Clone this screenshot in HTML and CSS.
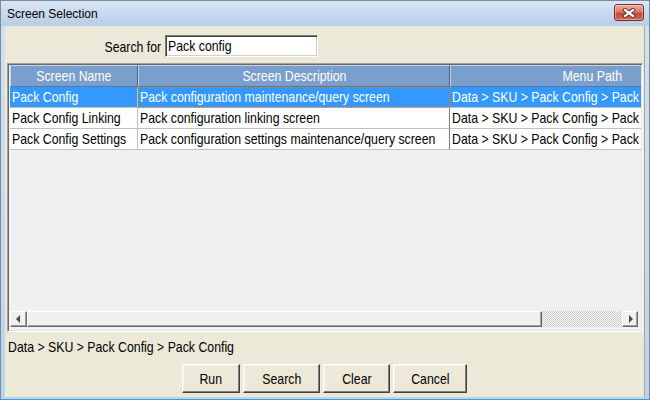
FILE: index.html
```html
<!DOCTYPE html>
<html>
<head>
<meta charset="utf-8">
<title>Screen Selection</title>
<link rel="stylesheet" href="styles.css">
</head>
<body>
<div class="window">
  <div class="titlebar">
    <span class="title">Screen Selection</span>
    <button class="close" aria-label="Close">
      <svg width="14" height="10" viewBox="0 0 14 10">
        <path d="M3 2 L11 8 M11 2 L3 8" stroke="#5b2a25" stroke-width="4" stroke-linecap="square" fill="none"/>
        <path d="M3 2 L11 8 M11 2 L3 8" stroke="#ffffff" stroke-width="2.2" stroke-linecap="square" fill="none"/>
      </svg>
    </button>
  </div>
  <div class="client">
    <div class="search-row">
      <label class="search-label"><span class="nt nt-r">Search for</span></label>
      <div class="search-input" role="textbox"><span class="nt">Pack config</span></div>
    </div>
    <div class="grid-frame">
      <div class="grid-view">
        <div class="grid">
          <div class="grid-row grid-head">
            <div class="hcell"><span class="nt nt-c">Screen Name</span></div>
            <div class="hcell"><span class="nt nt-c">Screen Description</span></div>
            <div class="hcell"><span class="nt nt-c">Menu Path</span></div>
          </div>
          <div class="grid-row selected">
            <div class="cell"><span class="nt">Pack Config</span></div>
            <div class="cell cell-desc focus"><span class="nt">Pack configuration maintenance/query screen</span></div>
            <div class="cell"><span class="nt">Data &gt; SKU &gt; Pack Config &gt; Pack Config</span></div>
          </div>
          <div class="grid-row">
            <div class="cell"><span class="nt">Pack Config Linking</span></div>
            <div class="cell cell-desc"><span class="nt">Pack configuration linking screen</span></div>
            <div class="cell"><span class="nt">Data &gt; SKU &gt; Pack Config &gt; Pack Config Linking</span></div>
          </div>
          <div class="grid-row">
            <div class="cell"><span class="nt">Pack Config Settings</span></div>
            <div class="cell cell-desc"><span class="nt">Pack configuration settings maintenance/query screen</span></div>
            <div class="cell"><span class="nt">Data &gt; SKU &gt; Pack Config &gt; Pack Config Settings</span></div>
          </div>
        </div>
      </div>
      <div class="hscroll">
        <div class="sb-btn sb-left"><span class="arrow arrow-left"></span></div>
        <div class="sb-thumb"></div>
        <div class="sb-track"></div>
        <div class="sb-btn sb-right"><span class="arrow arrow-right"></span></div>
      </div>
    </div>
    <div class="status"><span class="nt">Data &gt; SKU &gt; Pack Config &gt; Pack Config</span></div>
    <div class="buttons">
      <button class="btn btn-run"><span class="nt nt-c">Run</span></button>
      <button class="btn btn-search"><span class="nt nt-c">Search</span></button>
      <button class="btn btn-clear"><span class="nt nt-c">Clear</span></button>
      <button class="btn btn-cancel"><span class="nt nt-c">Cancel</span></button>
    </div>
  </div>
</div>
</body>
</html>
```
FILE: styles.css
```css
* { box-sizing: border-box; }
html, body { margin: 0; padding: 0; }
body { width: 650px; height: 400px; overflow: hidden; background: #c4d7ec; }

.window {
  width: 650px;
  height: 400px;
  display: flex;
  flex-direction: column;
  background: linear-gradient(#d3e2f2, #bcd3ec);
  border: 1px solid #7a8ba0;
  border-bottom-color: #3d9bd6;
}

.titlebar {
  height: 25px;
  flex: none;
  display: flex;
  align-items: center;
  padding: 0 5px 0 6px;
  background: linear-gradient(#d9e6f4, #b6cde8);
}
.title {
  font-family: "Liberation Sans", Arial, sans-serif;
  font-size: 12px;
  color: #000;
  flex: 1;
}
.close {
  width: 30px;
  height: 17px;
  padding: 0;
  margin: 0;
  align-self: flex-start;
  margin-top: 3px;
  border: 1px solid #7a2d26;
  border-radius: 3px;
  background: linear-gradient(#eab0a4 0%, #d97a68 45%, #c4493a 55%, #d06a58 100%);
  box-shadow: inset 0 0 0 1px rgba(255,255,255,0.35);
  display: flex;
  align-items: center;
  justify-content: center;
}

.client {
  flex: 1;
  margin: 0 4px 2px 4px;
  background: #ece9d8;
  border-right: 1px solid #a7a69c;
  font-family: "Liberation Sans", Arial, sans-serif;
  font-size: 15px;
  color: #000;
  display: flex;
  flex-direction: column;
}

/* Arial-Narrow-like text: Arial metrics condensed to 82% */
.nt {
  display: inline-block;
  white-space: nowrap;
  transform: scaleX(0.82);
  transform-origin: 0 50%;
}
.nt-c { transform-origin: 50% 50%; }
.nt-r { transform-origin: 100% 50%; }

.search-row {
  margin-top: 9px;
  height: 22px;
  display: flex;
  align-items: center;
  gap: 4px;
}
.search-label {
  width: 156px;
  text-align: right;
}
.search-input {
  width: 153px;
  height: 22px;
  padding: 0 2px;
  line-height: 20px;
  overflow: hidden;
  background: #fff;
  border: 1px solid;
  border-color: #7f7f7f #fff #fff #7f7f7f;
  box-shadow: inset 1px 1px #404040, inset -1px -1px #d4d0c8;
}

.grid-frame {
  margin: 6px 0 0 2px;
  width: 636px;
  height: 269px;
  border: 1px solid;
  border-color: #a0a0a0 #fff #fff #a0a0a0;
  box-shadow: inset 1px 1px #696969, inset -1px -1px #e3e3e3;
  padding: 1px;
  background: #f0f0f0;
  display: flex;
  flex-direction: column;
}
.grid-view {
  height: 246px;
  overflow: hidden;
  padding-left: 1px;
}
.grid { width: 724px; }
.grid-row {
  display: grid;
  grid-template-columns: 128px 312px 284px;
  height: 21px;
}
.grid-head { height: 22px; }
.hcell {
  background: #7b9fcc;
  color: #fff;
  text-align: center;
  line-height: 20px;
  border-top: 1px solid #c3d4ea;
  border-left: 1px solid #c3d4ea;
  border-right: 1px solid #4e627e;
  border-bottom: 1px solid #5d769a;
  white-space: nowrap;
  overflow: hidden;
}
.cell {
  background: #fff;
  line-height: 20px;
  padding-left: 2px;
  border-right: 1px solid #c0c0c0;
  border-bottom: 1px solid #c0c0c0;
  white-space: nowrap;
  overflow: hidden;
}
.cell-desc { border-right-color: #7d7d7d; }
.selected .cell { background: #3399ff; color: #fff; }
.focus { outline: 1px dotted #e8781e; outline-offset: -1px; }

.hscroll {
  height: 16px;
  margin: 0 3px 3px 1px;
  display: flex;
  flex: none;
}
.sb-btn, .sb-thumb {
  background: #f0f0f0;
  border: 1px solid;
  border-color: #fff #696969 #696969 #fff;
  box-shadow: inset -1px -1px #a0a0a0;
}
.sb-btn {
  display: flex;
  align-items: center;
  justify-content: center;
}
.sb-left { width: 17px; }
.sb-right { width: 16px; }
.sb-thumb { width: 515px; }
.sb-track {
  flex: 1;
  background: repeating-conic-gradient(#c6c6c6 0 25%, #ffffff 0 50%) 0 0 / 2px 2px;
}
.arrow { width: 0; height: 0; border-top: 4px solid transparent; border-bottom: 4px solid transparent; }
.arrow-left { border-right: 4px solid #4a4a4a; margin-left: -2px; }
.arrow-right { border-left: 4px solid #4a4a4a; margin-right: -2px; }

.status {
  margin-top: 6px;
  line-height: 18px;
  padding-left: 3px;
}

.buttons {
  margin-top: 8px;
  display: flex;
  justify-content: center;
  gap: 3px;
}
.btn {
  height: 29px;
  padding: 0;
  font: inherit;
  color: #000;
  background: #ece9d8;
  border: 1px solid;
  border-color: #fff #404040 #404040 #fff;
  box-shadow: inset -1px -1px #808080, inset 1px 1px #f5f4ec;
  overflow: hidden;
}
.btn-run { width: 58px; }
.btn-search { width: 77px; }
.btn-clear { width: 67px; }
.btn-cancel { width: 74px; }
```
